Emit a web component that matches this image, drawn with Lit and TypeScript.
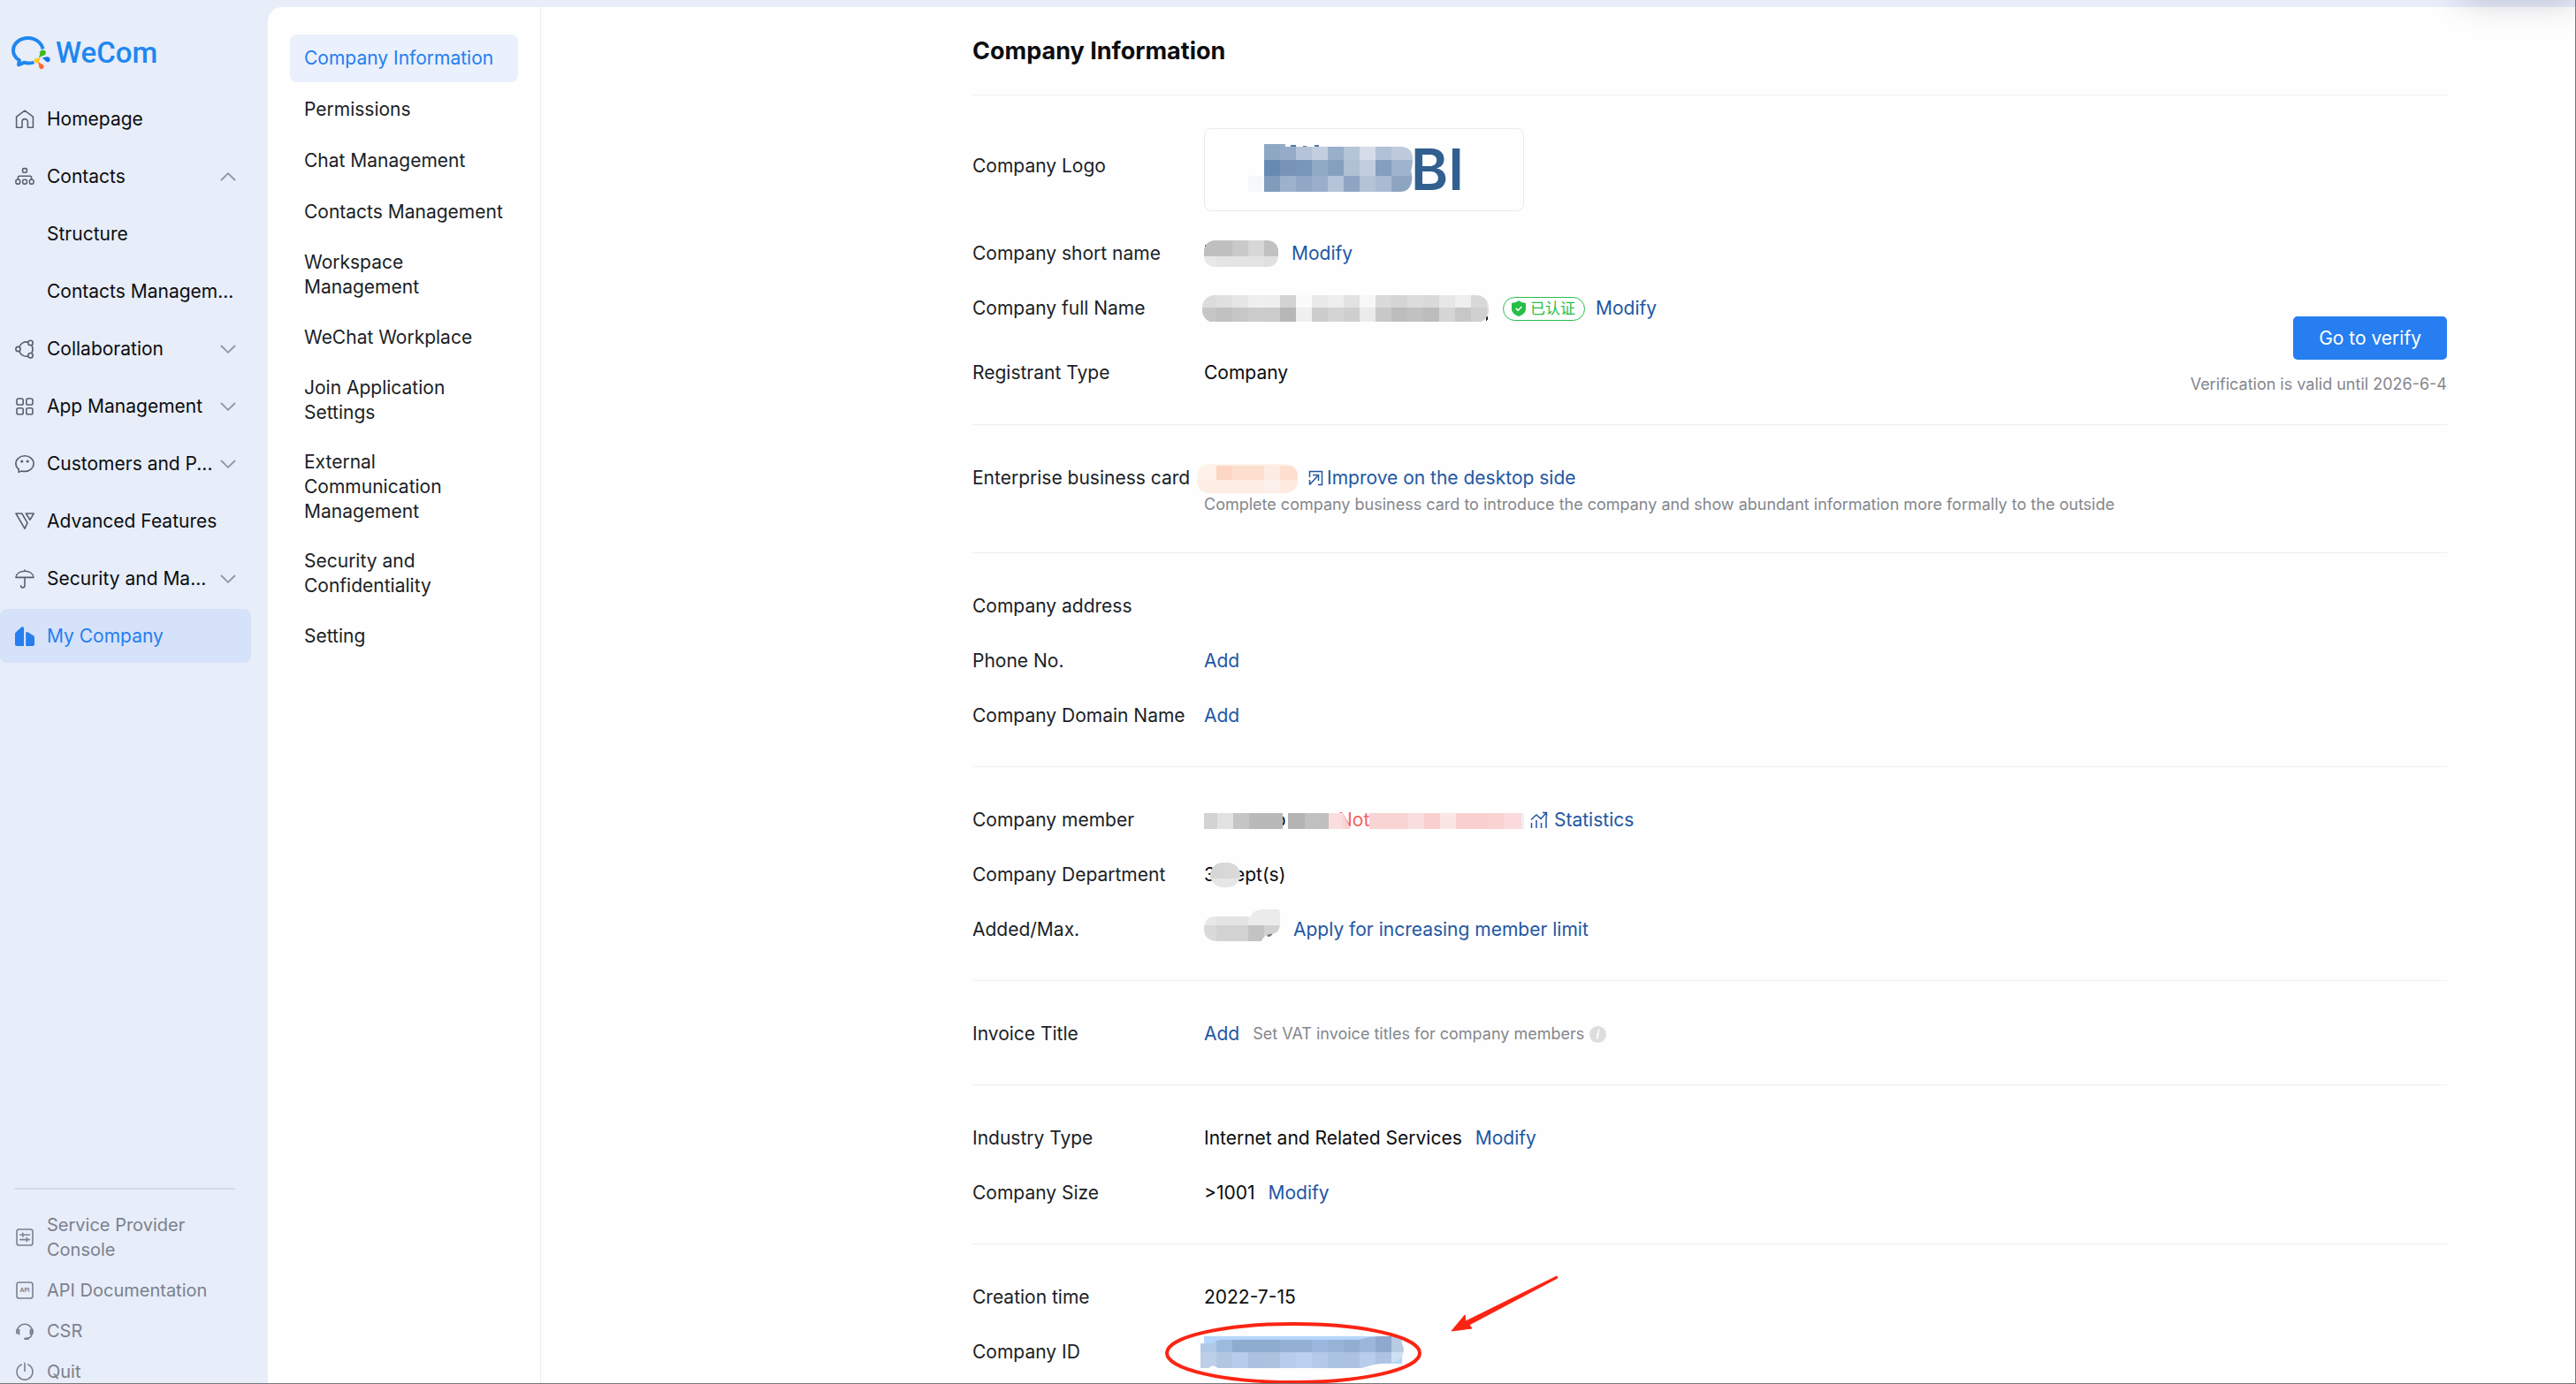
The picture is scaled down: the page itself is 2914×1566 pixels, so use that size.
import { LitElement, html, svg, css, nothing, TemplateResult } from "lit";
import { customElement, property } from "lit/decorators.js";

/* ---------- icons ---------- */

const line = (body: TemplateResult) => html`
  <svg viewBox="0 0 22 22" width="22" height="22" fill="none" stroke="currentColor"
    stroke-width="1.6" stroke-linejoin="round" stroke-linecap="round" aria-hidden="true">${body}</svg>`;

const icons: Record<string, TemplateResult> = {
  home: line(svg`<path d="M1.6 20.2V8.2L11 1.2l9.4 7v12h-6v-6.4a3.2 3.2 0 0 0-6.4 0v6.4z"/>`),
  contacts: line(svg`<rect x="8.6" y="1.6" width="4.8" height="4.6" rx="1.4"/>
    <path d="M3.4 14v-2.2c0-1 .6-1.6 1.6-1.6h12c1 0 1.6.6 1.6 1.6V14"/>
    <rect x="1" y="14.3" width="4.6" height="4.8" rx="1.3"/><rect x="8.7" y="14.3" width="4.6" height="4.8" rx="1.3"/><rect x="16.4" y="14.3" width="4.6" height="4.8" rx="1.3"/>`),
  collab: line(svg`<circle cx="3.5" cy="11" r="2.6"/><circle cx="17.5" cy="3.9" r="2.7"/><circle cx="17.5" cy="18.2" r="2.7"/>
    <path d="M5 8.3a8 8 0 0 1 9.4-5.2M5 13.7a8 8 0 0 0 9.4 5.3M19.2 7.3a9 9 0 0 1 0 7.6"/>`),
  apps: line(svg`<rect x="2" y="2" width="7.2" height="7" rx="1.8"/><rect x="12.8" y="2" width="7.2" height="7" rx="1.8"/>
    <rect x="2" y="12.8" width="7.2" height="7" rx="1.8"/><rect x="12.8" y="12.8" width="7.2" height="7" rx="1.8"/>`),
  customers: line(svg`<path d="M4.2 20.4V17C2 15.3.9 13.1.9 10.6.9 5.7 5.4 1.800 11 1.800s10.100 3.900 10.100 8.800-4.500 8.800-10.100 8.800c-1.300 0-2.500-.2-3.600-.5z"/>
    <circle cx="7.8" cy="8" r=".8" fill="currentColor"/><circle cx="14.2" cy="8" r=".8" fill="currentColor"/>`),
  advanced: line(svg`<path d="M1 2h6.800l6.200 10.600-3 6.600zM12.400 2H21.200l-4.200 7.200z"/>`),
  security: line(svg`<path d="M1 9.400C1.600 4.800 5.800 2.300 11 2.300s9.400 2.500 10 7.100zM11 1v1M11 9.600v9c0 1.500-.9 2.300-2.200 2.300s-2.200-.8-2.200-2.200"/>`),
  company: html`<svg viewBox="0 0 22 22" width="22" height="22" fill="currentColor" aria-hidden="true">
    <path d="M0 8.200c0-.8.3-1.500 1-2L7.400.5C8.500-.3 10 .3 10 1.700V22H2.200C.8 22 0 21.200 0 19.800zM12.200 7.400c0-1.300 1.100-1.900 2.200-1.200l6.200 3.900c.9.6 1.400 1.300 1.400 2.300v7.400c0 1.400-.8 2.200-2.200 2.200h-7.600z"/></svg>`,
  console: line(svg`<rect x="2" y="2" width="18" height="18" rx="2.6"/><path d="M5.800 8.300h10.600M5.800 13.600h10.600M8.800 6.300v4M13.400 11.600v4"/>`),
  api: html`<svg viewBox="0 0 22 22" width="22" height="22" aria-hidden="true">
    <rect x="2" y="2" width="18" height="18" rx="2.6" fill="none" stroke="currentColor" stroke-width="1.6"/>
    <text x="11" y="12.600" text-anchor="middle" font-family="Inter, sans-serif" font-size="6.500" font-weight="700" fill="currentColor">API</text></svg>`,
  csr: line(svg`<path d="M2.400 10.600a8.700 8.700 0 0 1 17.200 0M19.600 11.500c0 4.600-2.600 7.600-6.600 8"/>
    <path d="M2.200 9.600v4M4.400 9.800v4.600M17.600 9.800v4.600M19.800 9.600v4" stroke-width="2"/><path d="M11.400 19.700h3.200" stroke-width="2.6"/>`),
  quit: line(svg`<path d="M7.200 3a9 9 0 1 0 7.600 0M11 1.200v9.200"/>`),
};

const chevron = (up: boolean) => html`
  <svg class="chevron" viewBox="0 0 18 12" width="18" height="12" fill="none" stroke="currentColor" stroke-width="1.8"
    stroke-linecap="round" aria-hidden="true"><path d=${up ? "M1.5 9.5 9 2.2l7.5 7.3" : "M1.5 2.5 9 9.8l7.5-7.3"}/></svg>`;

const logo = html`
  <svg viewBox="0 0 44 38" width="44" height="38" fill="none" aria-hidden="true">
    <path d="M35.500 14.500C34 7.200 27 2 18.600 2 9.400 2 2 8.300 2 16c0 4.700 2.700 8.700 6.900 11.200L8 32.300l6-2.500c4 1 8 1 11.500-.3"
      stroke="#1f87f0" stroke-width="4" stroke-linejoin="round"/>
    <path d="M32.500 22.500c.5-1.800 1.200-3 .4-4.400a2.700 2.700 0 0 1 4.800-.4c.7 1.500-.3 2.800-1.600 3.200-1.200.4-2.400.8-3.600 1.600z" fill="#3cb81e" stroke="#3cb81e" stroke-width="2"/>
    <path d="M37 25c1.800-.2 3.400-1.200 4.500-.6a2.100 2.100 0 0 1-.2 3.900c-1.700.3-2.600-1.900-4.300-3.300z" fill="#1173e8" stroke="#1173e8" stroke-width="2"/>
    <path d="M31.500 31c1.500.8 3.200 1.200 4 2.600.6 1.700-.8 3-2.200 2.500-1.500-.7-1.200-2.800-1.800-5.100z" fill="#fb6a2c" stroke="#fb6a2c" stroke-width="2"/>
    <path d="M30.800 25.500c-.2 1.800.4 3-.9 3.700-2 .7-3.600-.8-3.400-2.300.5-1.400 2.800-.4 4.300-1.400z" fill="#fcc81b" stroke="#fcc81b" stroke-width="2"/>
  </svg>`;

/* ---------- pixelated redaction patches ---------- */

interface Band { y: number; h: number; cells: [number, string][]; x?: number }

const bands = (list: Band[]) => list.map((b) => {
  let x = b.x ?? 0;
  return b.cells.map(([w, fill]) => {
    const cell = svg`<rect x=${x} y=${b.y} width=${w} height=${b.h} fill=${fill} />`;
    x += w;
    return cell;
  });
});

const even = (colors: string): [number, string][] => colors.split(" ").map((c) => [18, "#" + c]);

let clipCount = 0;
const patch = (w: number, h: number, r: number, list: Band[], extra: unknown = nothing) => {
  const id = `clip${clipCount++}`;
  return html`<svg class="patch" viewBox="0 0 ${w} ${h}" width=${w} height=${h} shape-rendering="crispEdges" aria-hidden="true">
    <clipPath id=${id}><rect width=${w} height=${h} rx=${r} /></clipPath>${extra}
    <g clip-path="url(#${id})">${bands(list)}</g></svg>`;
};

const logoPatch = html`
  <svg class="patch" viewBox="0 0 188 58" width="188" height="58" aria-hidden="true">
    <clipPath id="brand"><path d="M0 0H42V3H172Q186 3 186 17Q186 26 184 30Q186 36 185 42Q183 54 172 54H0z"/></clipPath>
    <path d="M48 1h6v3h-6zM62 2h4v2h-4zM75 1h5v3h-5z" fill="#56799f"/>
    <g clip-path="url(#brand)" shape-rendering="crispEdges">${bands([
      { y: 0, h: 18, x: 18, cells: even("8ea7c4 95abc7 b4c3d7 c1cfdf 99b0ca b5c5d8 d5dde8 b1c2d6 bccadb bccadb") },
      { y: 18, h: 18, x: 18, cells: even("668bb2 7794b6 7896b8 90a9c5 85a0bf b0c1d4 c2cedd 839fbf 9fb3cc 9fb3cc") },
      { y: 36, h: 18, cells: even("f6f9fc 809cbd 9cb1cb 92a7c5 9baecb b5c4d8 8ea5c3 b4c3d6 a9bbd3 8ea5c2 8ea5c2") },
    ])}</g></svg>`;

const shortNamePatch = patch(84, 30, 12, [
  { y: 0, h: 18, cells: [[32, "#bfbfbf"], [18, "#c9c9c9"], [18, "#d7d7d7"], [18, "#c1c1c1"]] },
  { y: 18, h: 12, cells: [[14, "#e8e8e8"], [54, "#e4e4e4"], [18, "#e0e0e0"]] },
], svg`<path d="M1 5h2v4H1z" fill="#333"/>`);

const fullNamePatch = patch(324, 31, 14, [
  { y: 0, h: 14, x: -2, cells: even("dcdcdc e0e0e0 e6e6e6 efefef eeeeee d3d3d3 fbfbfb e9e9e9 eeeeee e2e2e2 f7f7f7 dadada d5d5d5 dcdcdc dadada e7e7e7 efefef d8d8d8 e4e4e4") },
  { y: 14, h: 16, x: -2, cells: even("c6c6c6 c0c0c0 c7c7c7 cccccc cbcbcb b7b7b7 f0f0f0 cccccc d4d4d4 cfcfcf ebebeb c8c8c8 bdbdbd c1c1c1 bcbcbc d5d5d5 c7c7c7 d0d0d0 d8d8d8") },
], svg`<path d="M321 24h2v3l-2 2z" fill="#222"/>`);

const cardPatch = patch(114, 33, 14, [
  { y: 0, h: 33, cells: [[114, "#fef2ea"]] },
  { y: 2, h: 16, x: 22, cells: [[18, "#fdd6c4"], [36, "#fddfcd"], [18, "#fdece1"], [20, "#fddfce"]] },
  { y: 18, h: 15, cells: [[76, "#feede3"], [18, "#fcf0ea"], [20, "#ffeadf"]] },
]);

const memberPatch = html`
  <svg class="patch" viewBox="0 0 362 28" width="362" height="28" aria-hidden="true">
    <text x="80" y="21" font-size="21" fill="#111">o</text>
    <text x="152" y="21" font-size="21" fill="#f5605f">Not</text>
    <g shape-rendering="crispEdges">${bands([
      { y: 6, h: 18, cells: [[15, "#d3d3d3"], [18, "#e2e2e2"], [18, "#c5c5c5"], [38, "#b9b9b9"]] },
      { y: 6, h: 18, x: 95, cells: [[19, "#b4b4b4"], [27, "#c0c0c0"], [16, "#fadede"]] },
      { y: 6, h: 18, x: 187, cells: [[44, "#f9d4d4"], [18, "#f9dede"], [18, "#facfcf"], [18, "#fbe6e6"], [36, "#facfcf"], [18, "#f9d2d2"], [20, "#fadada"], [3, "#efeff2"]] },
    ])}</g>
    <path d="M157 6l9 18h-9z" fill="#fcd3d3"/>
  </svg>`;

const deptPatch = patch(34, 28, 15, [
  { y: 0, h: 18, cells: [[16, "#d6d6d6"], [18, "#d9d9d9"]] },
  { y: 18, h: 10, cells: [[34, "#e6e6e6"]] },
]);

const limitPatch = html`
  <svg class="patch" viewBox="0 0 86 36" width="86" height="36" aria-hidden="true">
    <path d="M70 26h8q-1 5-6 5z" fill="#777"/>
    <clipPath id="limit"><path d="M12 8H53Q56 0 66 0H82Q86 0 86 4V18Q85 28 74 28Q68 29 65 36H14Q0 35 0 22Q0 9 12 8z"/></clipPath>
    <g clip-path="url(#limit)" shape-rendering="crispEdges">${bands([
      { y: 0, h: 18, cells: [[14, "#e8e8e8"], [36, "#e3e3e3"], [36, "#ebebeb"]] },
      { y: 18, h: 18, cells: [[14, "#dadada"], [36, "#d2d2d2"], [18, "#c3c3c3"], [18, "#d2d2d2"]] },
    ])}</g></svg>`;

const idPatch = html`
  <svg class="patch" viewBox="0 0 230 36" width="230" height="36" aria-hidden="true">
    <path d="M4 0h224v31H4z" fill="#b4d6fc"/>
    <clipPath id="cid"><path d="M0 8H14Q18 4 24 4H180Q192 0 206 0H216Q230 4 230 16Q229 27 216 30Q200 30 182 36H20L14 33L9 36H0z"/></clipPath>
    <g clip-path="url(#cid)" shape-rendering="crispEdges">${bands([
      { y: 0, h: 18, x: 0, cells: even("b1c9e6 9cb9de 8eabd0 8eabd0 8eabd0 93afd2 93afd2 9bb7dd 97b3d8 91add0 9ab6da 8ea9cd b7cce3") },
      { y: 18, h: 18, x: 0, cells: even("bdcfe8 b2c7e2 b6cceb abc1df adc2df b6cdec bad2f0 b3cae9 abc3e2 abc2e0 b7cdec adc3e1 cfe0f3") },
    ])}</g></svg>`;

/* ---------- elements ---------- */

interface NavItem { label: string; icon?: string; open?: boolean; fold?: boolean; active?: boolean }

const NAV: NavItem[] = [
  { label: "Homepage", icon: "home" },
  { label: "Contacts", icon: "contacts", fold: true, open: true },
  { label: "Structure" },
  { label: "Contacts Managem..." },
  { label: "Collaboration", icon: "collab", fold: true },
  { label: "App Management", icon: "apps", fold: true },
  { label: "Customers and P...", icon: "customers", fold: true },
  { label: "Advanced Features", icon: "advanced" },
  { label: "Security and Ma...", icon: "security", fold: true },
  { label: "My Company", icon: "company", active: true },
];

const FOOT: NavItem[] = [
  { label: "Service Provider Console", icon: "console" },
  { label: "API Documentation", icon: "api" },
  { label: "CSR", icon: "csr" },
  { label: "Quit", icon: "quit" },
];

@customElement("wc-sidebar")
export class WcSidebar extends LitElement {
  static styles = css`
    :host { display: flex; flex-direction: column; width: 303px; flex: none; }
    svg { display: block; flex: none; }
    a { color: inherit; text-decoration: none; }
    .brand { display: flex; align-items: center; gap: 6px; height: 40px; margin: 40px 0 24px 13px; color: #1f87f0;
      font: 500 33px/40px Roboto, sans-serif; }
    .nav { display: flex; flex-direction: column; gap: 4px; width: 284px; }
    .item { display: flex; align-items: center; box-sizing: border-box; height: 61px; padding: 0 17px; gap: 14px; border-radius: 8px; color: #0c0d10;
      white-space: nowrap; }
    .item.child { padding-left: 53px; }
    .item.active { background: #d6e2f9; color: #267ef0; }
    .icon { color: #5a6070; }
    .active .icon { color: inherit; }
    .label { flex: 1; min-width: 0; }
    .chevron { color: #8e95a3; }
    .foot { margin-top: auto; display: flex; flex-direction: column; gap: 18px; padding-top: 26px; margin-left: 16px; width: 250px;
      border-top: 2px solid #d5dbe8; color: #7b818d; font-size: 20px; line-height: 28px; }
    .foot-item { display: flex; align-items: center; gap: 14px; padding: 0 30px 0 1px; }
  `;

  render() {
    return html`
      <a class="brand" href="#home">${logo}<span>WeCom</span></a>
      <nav class="nav">
        ${NAV.map((n) => html`
          <a class="item ${n.active ? "active" : ""} ${n.icon ? "" : "child"}" href="#nav">
            ${n.icon ? html`<span class="icon">${icons[n.icon]}</span>` : nothing}
            <span class="label">${n.label}</span>
            ${n.fold ? chevron(!!n.open) : nothing}
          </a>`)}
      </nav>
      <div class="foot">
        ${FOOT.map((n) => html`<a class="foot-item" href="#foot">${icons[n.icon!]}<span>${n.label}</span></a>`)}
      </div>`;
  }
}

const SUBNAV = [
  "Company Information", "Permissions", "Chat Management", "Contacts Management", "Workspace Management",
  "WeChat Workplace", "Join Application Settings", "External Communication Management",
  "Security and Confidentiality", "Setting",
];

@customElement("wc-subnav")
export class WcSubnav extends LitElement {
  static styles = css`
    :host { display: flex; flex-direction: column; gap: 4px; box-sizing: border-box; width: 309px; flex: none;
      padding: 31px 25px; border-right: 1px solid #edeef1; }
    .link { display: flex; align-items: center; box-sizing: border-box; min-height: 54px; padding: 12px 14px 12px 16px; border-radius: 8px;
      color: #1b1f26; text-decoration: none; }
    .link.active { background: #eaf0fc; color: #267ef0; }
  `;

  render() {
    return html`${SUBNAV.map((s, i) => html`<a class="link ${i === 0 ? "active" : ""}" href="#section">${s}</a>`)}`;
  }
}

@customElement("wc-row")
export class WcRow extends LitElement {
  @property() label = "";

  static styles = css`
    :host { display: flex; }
    .label { width: 262px; flex: none; color: #1b1f26; white-space: nowrap; }
    .value { position: relative; display: flex; align-items: center; height: 28px; color: #0c0d10; white-space: nowrap; }
    :host([tall]) .value { height: auto; }
    :host([tall]) .label { padding-top: 29px; }
  `;

  render() {
    return html`<div class="label">${this.label}</div><div class="value"><slot></slot></div>`;
  }
}

@customElement("app-root")
export class AppRoot extends LitElement {
  static styles = css`
    :host { display: block; }
    .app { position: relative; display: flex; height: 100vh; overflow: hidden; background: #e7edf9;
      font-family: Inter, "Noto Sans CJK SC", sans-serif; font-size: 21px; line-height: 28px; }
    .frame { position: absolute; inset: 0; border: solid #77787b; border-width: 0 1px 1px 0; pointer-events: none; }
    .glow { position: absolute; right: 0; top: -30px; width: 128px; height: 30px; box-shadow: 0 0 36px rgba(30, 34, 60, 0.26); pointer-events: none; }
    .panel { display: flex; flex: 1; min-width: 0; margin-top: 8px; background: #fefefe; border-top-left-radius: 16px; }
    .main { flex: 1; min-width: 0; padding: 0 146px 0 488px; }
    .title { margin: 0; padding: 30px 0 29px; border-bottom: 1px solid #efeff0; font-size: 27px; line-height: 40px; font-weight: 700; color: #0c0d10; }
    .section { display: flex; flex-direction: column; gap: 34px; padding: 46px 0 43px; border-bottom: 1px solid #efeff0; }
    .section.intro { flex-direction: row; justify-content: space-between; padding: 37px 0 31px; }
    .section.card { padding-bottom: 38px; gap: 0; }
    .section:last-child { border-bottom: 0; padding-bottom: 0; }
    .rows { display: flex; flex-direction: column; gap: 34px; }
    .registrant { margin-top: 11px; }
    .link { color: #2257a3; text-decoration: none; }
    .gap { margin-left: 15px; }
    .patch { display: block; flex: none; }
    .logo-box { display: flex; align-items: center; box-sizing: border-box; width: 362px; height: 94px; padding-left: 49px;
      border: 1px solid #e8e9ea; border-radius: 8px; }
    .logo-text { margin-left: -4px; font-size: 64px; line-height: 64px; font-weight: 600; color: #315f8f; }
    .wide { margin-left: -2px; }
    .badge { display: flex; align-items: center; gap: 5px; box-sizing: border-box; height: 27px; margin: 0 12px 0 16px; padding: 0 10px 0 9px;
      border: 1px solid #26bf48; border-radius: 14px; color: #26bf48; font-size: 17px; line-height: 25px; }
    .card-mark { margin-left: -8px; }
    .card-link { display: flex; align-items: center; gap: 4px; margin-left: 12px; }
    .hint { color: #84878c; font-size: 18px; }
    .card .hint { padding-left: 262px; line-height: 32px; }
    .stat-link { display: flex; align-items: center; gap: 7px; margin-left: 7px; }
    .dept-mark { margin: 0 -7px 0 -6px; position: relative; }
    .limit-mark { margin-bottom: 10px; }
    .info { margin-left: 6px; display: block; }
    .verify { display: flex; flex-direction: column; align-items: flex-end; gap: 14px; padding-top: 213px; }
    .verify-btn { height: 49px; padding: 0 29px; border: 0; border-radius: 5px; background: #267ef0; color: #fff;
      font: inherit; }
    .marker { position: absolute; left: -46px; top: -76px; pointer-events: none; }
    .id-mark { margin-left: -4px; }
  `;

  render() {
    const modify = html`<a class="link gap" href="#modify">Modify</a>`;
    const add = html`<a class="link" href="#add">Add</a>`;
    return html`
      <div class="app">
        <wc-sidebar></wc-sidebar>
        <div class="panel">
          <wc-subnav></wc-subnav>
          <main class="main">
            <h1 class="title">Company Information</h1>

            <section class="section intro">
              <div class="rows">
                <wc-row label="Company Logo" tall>
                  <div class="logo-box">${logoPatch}<span class="logo-text">BI</span></div>
                </wc-row>
                <wc-row label="Company short name">${shortNamePatch}${modify}</wc-row>
                <wc-row label="Company full Name">
                  <span class="wide">${fullNamePatch}</span>
                  <span class="badge">
                    <svg viewBox="0 0 16 18" width="16" height="18" aria-hidden="true">
                      <path d="M8 0c2.3 1.8 5 2.7 8 2.9v6.6c0 4-3 6.7-8 8.5-5-1.800-8-4.500-8-8.500V2.900C3 2.700 5.700 1.800 8 0z" fill="#26bf48"/>
                      <path d="M4.800 8.900l2.500 2.400 4-4.200" fill="none" stroke="#fff" stroke-width="1.500"/></svg>
                    已认证</span>
                  <a class="link" href="#modify">Modify</a>
                </wc-row>
                <wc-row class="registrant" label="Registrant Type">Company</wc-row>
              </div>
              <div class="verify">
                <button class="verify-btn" type="button">Go to verify</button>
                <span class="hint">Verification is valid until 2026-6-4</span>
              </div>
            </section>

            <section class="section card">
              <wc-row label="Enterprise business card">
                <span class="card-mark">${cardPatch}</span>
                <a class="link card-link" href="#card">
                  <svg viewBox="0 0 17 18" width="17" height="18" fill="none" stroke="currentColor" stroke-width="1.5" aria-hidden="true">
                    <path d="M1.500 8V1.500h14v15H11M1.500 16.500 10.500 6.500M5 5.500h6.500V12M1.500 11v5.500"/></svg>
                  Improve on the desktop side</a>
              </wc-row>
              <div class="hint">Complete company business card to introduce the company and show abundant information more formally to the outside</div>
            </section>

            <section class="section">
              <wc-row label="Company address"></wc-row>
              <wc-row label="Phone No.">${add}</wc-row>
              <wc-row label="Company Domain Name">${add}</wc-row>
            </section>

            <section class="section">
              <wc-row label="Company member">
                ${memberPatch}
                <a class="link stat-link" href="#statistics">
                  <svg viewBox="0 0 20 20" width="20" height="20" fill="none" stroke="currentColor" stroke-width="1.5" aria-hidden="true">
                    <path d="M1.500 19v-6M7 19v-9M12.500 19v-6M18 19V6M1 9.500 7 4l5 4.500L18 2M14 1.500h4.500V6"/></svg>
                  Statistics</a>
              </wc-row>
              <wc-row label="Company Department">3<span class="dept-mark">${deptPatch}</span>ept(s)</wc-row>
              <wc-row label="Added/Max."><span class="limit-mark">${limitPatch}</span><a class="link gap" href="#limit">Apply for increasing member limit</a></wc-row>
            </section>

            <section class="section">
              <wc-row label="Invoice Title">${add}<span class="hint gap">Set VAT invoice titles for company members</span>
                <svg class="info" viewBox="0 0 19 19" width="19" height="19" aria-hidden="true">
                  <circle cx="9.5" cy="9.5" r="9.5" fill="#dcdddf"/>
                  <path d="M9.900 8 8.800 14M10.400 4.600l-.2 1.200" stroke="#fff" stroke-width="2" stroke-linecap="round"/></svg>
              </wc-row>
            </section>

            <section class="section">
              <wc-row label="Industry Type">Internet and Related Services${modify}</wc-row>
              <wc-row label="Company Size">&gt;1001${modify}</wc-row>
            </section>

            <section class="section">
              <wc-row label="Creation time">2022-7-15</wc-row>
              <wc-row label="Company ID">
                <span class="id-mark">${idPatch}</span>
                <svg class="marker" viewBox="0 0 450 126" width="450" height="126" aria-hidden="true">
                  <ellipse cx="147" cy="91" rx="143" ry="33" fill="none" stroke="#fb2413" stroke-width="4"/>
                  <path d="M326 66 341 48 342 55 445 4 446 6 346 59 349 63z" fill="#fb2413" stroke="#fb2413" stroke-linejoin="round"/></svg>
              </wc-row>
            </section>
          </main>
        </div>
        <div class="glow"></div>
        <div class="frame"></div>
      </div>`;
  }
}
